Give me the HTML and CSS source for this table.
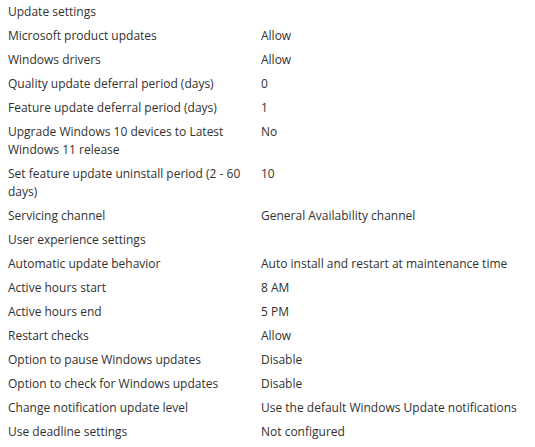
FILE: index.html
```html
<!DOCTYPE html>
<html lang="en">
<head>
    <meta charset="UTF-8">
    <title>Update ring settings</title>
    <link rel="stylesheet" href="styles.css">
</head>
<body>
    <div class="settings">
        <div class="section-title">Update settings</div>
        <div class="row"><div class="label">Microsoft product updates</div><div class="value">Allow</div></div>
        <div class="row"><div class="label">Windows drivers</div><div class="value">Allow</div></div>
        <div class="row"><div class="label">Quality update deferral period (days)</div><div class="value">0</div></div>
        <div class="row"><div class="label">Feature update deferral period (days)</div><div class="value">1</div></div>
        <div class="row"><div class="label">Upgrade Windows 10 devices to Latest Windows 11 release</div><div class="value">No</div></div>
        <div class="row"><div class="label">Set feature update uninstall period (2 - 60 days)</div><div class="value">10</div></div>
        <div class="row"><div class="label">Servicing channel</div><div class="value">General Availability channel</div></div>

        <div class="section-title">User experience settings</div>
        <div class="row"><div class="label">Automatic update behavior</div><div class="value">Auto install and restart at maintenance time</div></div>
        <div class="row"><div class="label">Active hours start</div><div class="value">8 AM</div></div>
        <div class="row"><div class="label">Active hours end</div><div class="value">5 PM</div></div>
        <div class="row"><div class="label">Restart checks</div><div class="value">Allow</div></div>
        <div class="row"><div class="label">Option to pause Windows updates</div><div class="value">Disable</div></div>
        <div class="row"><div class="label">Option to check for Windows updates</div><div class="value">Disable</div></div>
        <div class="row"><div class="label">Change notification update level</div><div class="value">Use the default Windows Update notifications</div></div>
        <div class="row"><div class="label">Use deadline settings</div><div class="value">Not configured</div></div>
    </div>
</body>
</html>
```

FILE: styles.css
```css
* {
    margin: 0;
    padding: 0;
    box-sizing: border-box;
}

body {
    font-family: "Open Sans", "Noto Sans", sans-serif;
    font-size: 12px;
    line-height: 18px;
    color: #323130;
    background: #fff;
}

.settings {
    padding: 0 8px;
}

.section-title {
    padding: 3px 0;
}

.row {
    display: grid;
    grid-template-columns: 245px 1fr;
    column-gap: 8px;
    padding: 3px 0;
}
```
